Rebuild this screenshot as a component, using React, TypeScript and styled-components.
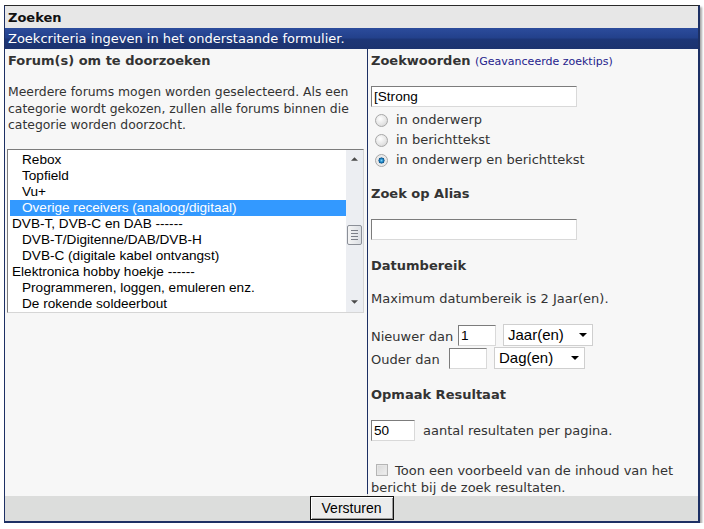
import * as React from 'react';
import styled, { createGlobalStyle } from 'styled-components';

const navy = '#1d3064';
const text = '#333333';
const verdana = '"DejaVu Sans", Verdana, sans-serif';
const arial = '"Liberation Sans", Arial, sans-serif';

const GlobalStyle = createGlobalStyle`
  html, body {
    margin: 0;
    padding: 0;
    background: #ffffff;
  }
  body {
    font-family: ${verdana};
    font-size: 13px;
    color: ${text};
  }
`;

const Frame = styled.div({
  margin: '5px 0 0 4px',
  width: '693px',
  borderLeft: `1px solid ${navy}`,
  borderRight: `2px solid ${navy}`,
  borderBottom: `2px solid ${navy}`,
  borderTop: '1px solid #2a2a2a',
  boxShadow: '2px 2px 2px rgba(0,0,0,0.35)',
});

const TitleBar = styled.div({
  height: '22px',
  lineHeight: '24px',
  padding: '0 3px',
  background: '#e7e7e7',
  fontWeight: 'bold',
  color: '#111',
});

const InfoBar = styled.div({
  height: '21px',
  lineHeight: '21px',
  padding: '0 3px',
  color: '#ffffff',
  background: 'linear-gradient(#2c4c9c 0%, #23418c 45%, #1d3676 55%, #1c336f 100%)',
});

const Body = styled.div({
  display: 'grid',
  gridTemplateColumns: '362px 330px',
  columnGap: '1px',
  background: navy,
  height: '444px',
  borderBottom: `1px solid ${navy}`,
});

const Column = styled.div({
  background: '#f7f7f7',
  padding: '4px 3px 0 3px',
  display: 'flex',
  flexDirection: 'column',
  lineHeight: '16px',
});

const Heading = styled.div<{ $top?: number }>(({ $top = 0 }) => ({
  fontWeight: 'bold',
  marginTop: `${$top}px`,
  color: text,
}));

const Hint = styled.span({
  fontWeight: 'normal',
  fontSize: '11px',
  color: '#25238c',
});

const Para = styled.p<{ $top?: number; $size?: number }>(({ $top = 0, $size = 13 }) => ({
  margin: `${$top}px 0 0 0`,
  lineHeight: '16.5px',
  fontSize: `${$size}px`,
}));

const ListBox = styled.div({
  marginTop: '15px',
  height: '164px',
  width: '357px',
  boxSizing: 'border-box',
  border: '1px solid',
  borderColor: '#7c7c7c #d6d6d6 #d6d6d6 #7c7c7c',
  background: '#ffffff',
  display: 'flex',
  marginLeft: '-1px',
});

const Options = styled.div({
  flex: 1,
  padding: '2px 0 0 2px',
  fontFamily: arial,
  fontSize: '13.6px',
  color: '#000',
});

const Option = styled.div<{ $sub?: boolean; $selected?: boolean }>(({ $sub, $selected }) => ({
  height: '16px',
  lineHeight: '16px',
  paddingLeft: $sub ? '12px' : '2px',
  background: $selected ? '#3399ff' : 'transparent',
  color: $selected ? '#ffffff' : '#000000',
  whiteSpace: 'nowrap',
}));

const ScrollTrack = styled.div({
  width: '17px',
  background: '#eceef2',
  display: 'flex',
  flexDirection: 'column',
  alignItems: 'center',
  justifyContent: 'space-between',
  padding: '2px 0',
  position: 'relative',
});

const ArrowBox = styled.div({
  height: '14px',
  width: '15px',
  display: 'flex',
  alignItems: 'center',
  justifyContent: 'center',
});

const Thumb = styled.div({
  position: 'absolute',
  top: '75px',
  left: '1px',
  width: '13px',
  height: '18px',
  border: '1px solid #8b8f97',
  borderRadius: '2px',
  background: 'linear-gradient(90deg, #f4f4f4, #dcdfe4)',
  display: 'flex',
  flexDirection: 'column',
  alignItems: 'center',
  justifyContent: 'center',
  gap: '2px',
});

const Grip = styled.span({
  width: '7px',
  height: '1px',
  background: '#7b7f87',
});

const TextInput = styled.input<{ $w: number; $top?: number }>(({ $w, $top = 0 }) => ({
  width: `${$w}px`,
  height: '21px',
  boxSizing: 'border-box',
  marginTop: `${$top}px`,
  border: '1px solid',
  borderColor: '#7c7c7c #d9d9d9 #d9d9d9 #7c7c7c',
  background: '#ffffff',
  fontFamily: arial,
  fontSize: '13.6px',
  color: '#000',
  padding: '1px 2px',
  outline: 'none',
}));

const RadioList = styled.div({
  marginTop: '3px',
  display: 'flex',
  flexDirection: 'column',
});

const ChoiceRow = styled.label({
  display: 'flex',
  alignItems: 'center',
  height: '20px',
  gap: '8px',
  paddingLeft: '4px',
});

const Radio = styled.input.attrs({ type: 'radio' })({
  appearance: 'none',
  margin: 0,
  width: '13px',
  height: '13px',
  borderRadius: '50%',
  border: '1px solid #a8a8a8',
  background: 'radial-gradient(circle at 40% 35%, #ffffff 0%, #e4e4e4 60%, #cfcfcf 100%)',
  boxSizing: 'border-box',
  '&:checked': {
    background:
      'radial-gradient(circle at 50% 50%, #7fd0f5 0%, #1a84c4 22%, #0b4f85 36%, #e6e6e6 42%, #f3f3f3 100%)',
  },
});

const Row = styled.div<{ $top?: number }>(({ $top = 0 }) => ({
  display: 'flex',
  alignItems: 'center',
  marginTop: `${$top}px`,
  height: '21px',
}));

const RowLabel = styled.span<{ $w: number }>(({ $w }) => ({
  width: `${$w}px`,
  paddingTop: '4px',
}));

const Select = styled.div<{ $w: number }>(({ $w }) => ({
  width: `${$w}px`,
  height: '22px',
  boxSizing: 'border-box',
  marginLeft: '7px',
  border: '1px solid #cfcfcf',
  background: '#ffffff',
  display: 'flex',
  alignItems: 'center',
  justifyContent: 'space-between',
  padding: '0 5px 0 4px',
  fontFamily: arial,
  fontSize: '15px',
  color: '#000',
}));

const Suffix = styled.span({
  marginLeft: '8px',
  paddingTop: '2px',
});

const CheckRow = styled.div({
  marginTop: '21px',
  lineHeight: '17px',
});

const Check = styled.input.attrs({ type: 'checkbox' })({
  appearance: 'none',
  margin: '0 7px 0 5px',
  width: '12px',
  height: '12px',
  verticalAlign: '-1px',
  border: '1px solid #b5b5b5',
  background: 'linear-gradient(135deg, #d8d8d8, #f0f0f0)',
  boxShadow: 'inset 0 0 0 1px #e6e6e6',
  boxSizing: 'border-box',
});

const Footer = styled.div({
  height: '27px',
  background: '#dcdddc',
  display: 'flex',
  alignItems: 'center',
  justifyContent: 'center',
});

const Button = styled.button({
  width: '84px',
  height: '24px',
  border: '1px solid #111',
  boxShadow: 'inset 1px 1px 0 #ffffff, inset -1px -1px 0 #9a9a9a',
  background: '#ececec',
  fontFamily: arial,
  fontSize: '14px',
  color: '#000',
  padding: 0,
});

const Triangle: React.FC<{ dir: 'up' | 'down'; size?: number; color?: string }> = ({
  dir,
  size = 7,
  color = '#4a4a4a',
}) => (
  <svg width={size} height={Math.ceil(size / 2) + 1} viewBox="0 0 8 5">
    {dir === 'up' ? (
      <polygon points="0,5 4,1 8,5" fill={color} />
    ) : (
      <polygon points="0,0 8,0 4,4" fill={color} />
    )}
  </svg>
);

const forums: { label: string; sub?: boolean; selected?: boolean }[] = [
  { label: 'Rebox', sub: true },
  { label: 'Topfield', sub: true },
  { label: 'Vu+', sub: true },
  { label: 'Overige receivers (analoog/digitaal)', sub: true, selected: true },
  { label: 'DVB-T, DVB-C en DAB ------' },
  { label: 'DVB-T/Digitenne/DAB/DVB-H', sub: true },
  { label: 'DVB-C (digitale kabel ontvangst)', sub: true },
  { label: 'Elektronica hobby hoekje ------' },
  { label: 'Programmeren, loggen, emuleren enz.', sub: true },
  { label: 'De rokende soldeerbout', sub: true },
];

export default function App() {
  return (
    <>
      <GlobalStyle />
      <Frame>
        <TitleBar>Zoeken</TitleBar>
        <InfoBar>Zoekcriteria ingeven in het onderstaande formulier.</InfoBar>
        <Body>
          <Column>
            <Heading>Forum(s) om te doorzoeken</Heading>
            <Para $top={15} $size={12.4}>
              Meerdere forums mogen worden geselecteerd. Als een categorie wordt gekozen, zullen alle
              forums binnen die categorie worden doorzocht.
            </Para>
            <ListBox>
              <Options>
                {forums.map((f) => (
                  <Option key={f.label} $sub={f.sub} $selected={f.selected}>
                    {f.label}
                  </Option>
                ))}
              </Options>
              <ScrollTrack>
                <ArrowBox>
                  <Triangle dir="up" />
                </ArrowBox>
                <Thumb>
                  <Grip />
                  <Grip />
                  <Grip />
                  <Grip />
                </Thumb>
                <ArrowBox>
                  <Triangle dir="down" />
                </ArrowBox>
              </ScrollTrack>
            </ListBox>
          </Column>

          <Column>
            <Heading>
              Zoekwoorden <Hint>(Geavanceerde zoektips)</Hint>
            </Heading>
            <TextInput $w={206} $top={16} defaultValue="[Strong" />
            <RadioList>
              <ChoiceRow>
                <Radio name="where" />
                in onderwerp
              </ChoiceRow>
              <ChoiceRow>
                <Radio name="where" />
                in berichttekst
              </ChoiceRow>
              <ChoiceRow>
                <Radio name="where" defaultChecked />
                in onderwerp en berichttekst
              </ChoiceRow>
            </RadioList>

            <Heading $top={16}>Zoek op Alias</Heading>
            <TextInput $w={206} $top={17} />

            <Heading $top={18}>Datumbereik</Heading>
            <Para $top={17}>Maximum datumbereik is 2 Jaar(en).</Para>

            <Row $top={17}>
              <RowLabel $w={87}>Nieuwer dan</RowLabel>
              <TextInput $w={38} defaultValue="1" />
              <Select $w={90}>
                Jaar(en)
                <Triangle dir="down" size={8} color="#000" />
              </Select>
            </Row>
            <Row $top={2}>
              <RowLabel $w={78}>Ouder dan</RowLabel>
              <TextInput $w={38} />
              <Select $w={91}>
                Dag(en)
                <Triangle dir="down" size={8} color="#000" />
              </Select>
            </Row>

            <Heading $top={18}>Opmaak Resultaat</Heading>
            <Row $top={17}>
              <TextInput $w={44} defaultValue="50" />
              <Suffix>aantal resultaten per pagina.</Suffix>
            </Row>

            <CheckRow>
              <Check />
              Toon een voorbeeld van de inhoud van het bericht bij de zoek resultaten.
            </CheckRow>
          </Column>
        </Body>
        <Footer>
          <Button>Versturen</Button>
        </Footer>
      </Frame>
    </>
  );
}
